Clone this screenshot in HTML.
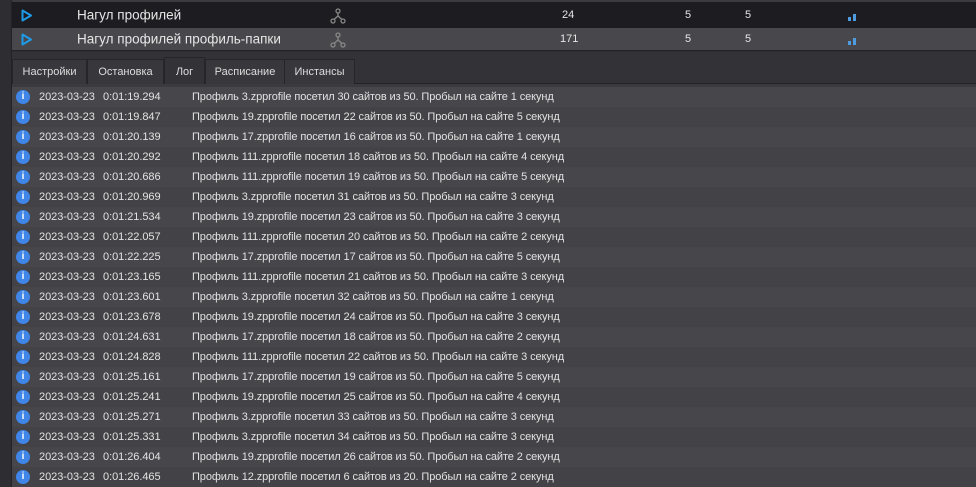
<!DOCTYPE html>
<html><head><meta charset="utf-8"><style>
*{margin:0;padding:0;box-sizing:border-box}
body{width:976px;height:487px;overflow:hidden;background:#2e2d31;font-family:"Liberation Sans","DejaVu Sans",sans-serif;color:#e6e6e6;position:relative}
.top{position:absolute;left:0;top:0;width:976px;height:2px;background:#3c3b40}
.r{position:absolute;left:12px;width:964px;font-size:13.5px}
.r1{top:2px;height:26px;background:#1d1c21}
.r2{top:28px;height:23px;background:#48474c;border-bottom:1px solid #232226}
.r span{position:absolute;top:50%;transform:translateY(-50%)}
.lbar{position:absolute;left:0;top:0;width:12px;height:487px;background:#2e2d31;border-right:1px solid #232226}
.tabs{position:absolute;left:12px;top:52px;width:964px;height:32px;background:#333237;border-bottom:1px solid #232226}
.gap{position:absolute;left:12px;top:84px;width:964px;height:3px;background:#3b3a3f}
.tab{position:absolute;top:7px;height:25px;background:#38373c;border:1px solid #262529;border-bottom:none;font-size:11px;color:#ddd;text-align:center;line-height:25px}
.tab.a{top:5px;height:28px;background:#333237;line-height:28px}
.log{position:absolute;left:12px;top:87px;width:964px}
.row{height:20px;position:relative;font-size:11px;color:#e2e2e2;line-height:20px;white-space:nowrap;letter-spacing:-0.05px}
.row:nth-child(odd){background:#47464b}
.row:nth-child(even){background:#434247}
.ic{position:absolute;left:4px;top:3px;width:14px;height:14px;border-radius:50%;background:#3f86e8;color:#fff;font-weight:bold;font-style:normal;font-size:10px;line-height:14px;text-align:center;font-family:"Liberation Sans",sans-serif}
.d{position:absolute;left:27px}.t{position:absolute;left:91px}.m{position:absolute;left:180px;letter-spacing:-0.1px}
</style></head><body>
<div class="top"></div>
<div class="lbar"></div>
<div class="r r1">
<svg style="position:absolute;left:9px;top:7px" width="12" height="13"><path d="M1.5 1.5 L10 6.5 L1.5 11.5 Z" fill="none" stroke="#1e9be8" stroke-width="2" stroke-linejoin="round"/></svg>
<span style="left:65px">Нагул профилей</span>
<svg style="position:absolute;left:318px;top:6px" width="16" height="16"><g fill="none" stroke="#888" stroke-width="1.3"><circle cx="8" cy="3" r="2"/><circle cx="3" cy="13" r="2"/><circle cx="13" cy="13" r="2"/><path d="M8 5v3M8 8L4 11.5M8 8l4 3.5"/></g></svg>
<span style="left:550px;font-size:11px">24</span><span style="left:673px;font-size:11px">5</span><span style="left:733px;font-size:11px">5</span>
<svg style="position:absolute;left:836px;top:11px" width="9" height="9"><rect x="0" y="4" width="3" height="4" fill="#4d9be0"/><rect x="5" y="1" width="3" height="7" fill="#4d9be0"/></svg>
</div>
<div class="r r2">
<svg style="position:absolute;left:9px;top:5px" width="12" height="13"><path d="M1.5 1.5 L10 6.5 L1.5 11.5 Z" fill="none" stroke="#1e9be8" stroke-width="2" stroke-linejoin="round"/></svg>
<span style="left:65px">Нагул профилей профиль-папки</span>
<svg style="position:absolute;left:318px;top:4px" width="16" height="16"><g fill="none" stroke="#888" stroke-width="1.3"><circle cx="8" cy="3" r="2"/><circle cx="3" cy="13" r="2"/><circle cx="13" cy="13" r="2"/><path d="M8 5v3M8 8L4 11.5M8 8l4 3.5"/></g></svg>
<span style="left:548px;font-size:11px">171</span><span style="left:673px;font-size:11px">5</span><span style="left:733px;font-size:11px">5</span>
<svg style="position:absolute;left:836px;top:9px" width="9" height="9"><rect x="0" y="4" width="3" height="4" fill="#4d9be0"/><rect x="5" y="1" width="3" height="7" fill="#4d9be0"/></svg>
</div>
<div class="tabs">
<div class="tab" style="left:0;width:75px">Настройки</div>
<div class="tab" style="left:75px;width:77px">Остановка</div>
<div class="tab a" style="left:152px;width:41px">Лог</div>
<div class="tab" style="left:193px;width:80px">Расписание</div>
<div class="tab" style="left:272px;width:71px">Инстансы</div>
</div>
<div class="gap"></div>
<div class="log">
<div class="row"><i class="ic">i</i><span class="d">2023-03-23</span><span class="t">0:01:19.294</span><span class="m">Профиль 3.zpprofile посетил 30 сайтов из 50. Пробыл на сайте 1 секунд</span></div>
<div class="row"><i class="ic">i</i><span class="d">2023-03-23</span><span class="t">0:01:19.847</span><span class="m">Профиль 19.zpprofile посетил 22 сайтов из 50. Пробыл на сайте 5 секунд</span></div>
<div class="row"><i class="ic">i</i><span class="d">2023-03-23</span><span class="t">0:01:20.139</span><span class="m">Профиль 17.zpprofile посетил 16 сайтов из 50. Пробыл на сайте 1 секунд</span></div>
<div class="row"><i class="ic">i</i><span class="d">2023-03-23</span><span class="t">0:01:20.292</span><span class="m">Профиль 111.zpprofile посетил 18 сайтов из 50. Пробыл на сайте 4 секунд</span></div>
<div class="row"><i class="ic">i</i><span class="d">2023-03-23</span><span class="t">0:01:20.686</span><span class="m">Профиль 111.zpprofile посетил 19 сайтов из 50. Пробыл на сайте 5 секунд</span></div>
<div class="row"><i class="ic">i</i><span class="d">2023-03-23</span><span class="t">0:01:20.969</span><span class="m">Профиль 3.zpprofile посетил 31 сайтов из 50. Пробыл на сайте 3 секунд</span></div>
<div class="row"><i class="ic">i</i><span class="d">2023-03-23</span><span class="t">0:01:21.534</span><span class="m">Профиль 19.zpprofile посетил 23 сайтов из 50. Пробыл на сайте 3 секунд</span></div>
<div class="row"><i class="ic">i</i><span class="d">2023-03-23</span><span class="t">0:01:22.057</span><span class="m">Профиль 111.zpprofile посетил 20 сайтов из 50. Пробыл на сайте 2 секунд</span></div>
<div class="row"><i class="ic">i</i><span class="d">2023-03-23</span><span class="t">0:01:22.225</span><span class="m">Профиль 17.zpprofile посетил 17 сайтов из 50. Пробыл на сайте 5 секунд</span></div>
<div class="row"><i class="ic">i</i><span class="d">2023-03-23</span><span class="t">0:01:23.165</span><span class="m">Профиль 111.zpprofile посетил 21 сайтов из 50. Пробыл на сайте 3 секунд</span></div>
<div class="row"><i class="ic">i</i><span class="d">2023-03-23</span><span class="t">0:01:23.601</span><span class="m">Профиль 3.zpprofile посетил 32 сайтов из 50. Пробыл на сайте 1 секунд</span></div>
<div class="row"><i class="ic">i</i><span class="d">2023-03-23</span><span class="t">0:01:23.678</span><span class="m">Профиль 19.zpprofile посетил 24 сайтов из 50. Пробыл на сайте 3 секунд</span></div>
<div class="row"><i class="ic">i</i><span class="d">2023-03-23</span><span class="t">0:01:24.631</span><span class="m">Профиль 17.zpprofile посетил 18 сайтов из 50. Пробыл на сайте 2 секунд</span></div>
<div class="row"><i class="ic">i</i><span class="d">2023-03-23</span><span class="t">0:01:24.828</span><span class="m">Профиль 111.zpprofile посетил 22 сайтов из 50. Пробыл на сайте 3 секунд</span></div>
<div class="row"><i class="ic">i</i><span class="d">2023-03-23</span><span class="t">0:01:25.161</span><span class="m">Профиль 17.zpprofile посетил 19 сайтов из 50. Пробыл на сайте 5 секунд</span></div>
<div class="row"><i class="ic">i</i><span class="d">2023-03-23</span><span class="t">0:01:25.241</span><span class="m">Профиль 19.zpprofile посетил 25 сайтов из 50. Пробыл на сайте 4 секунд</span></div>
<div class="row"><i class="ic">i</i><span class="d">2023-03-23</span><span class="t">0:01:25.271</span><span class="m">Профиль 3.zpprofile посетил 33 сайтов из 50. Пробыл на сайте 3 секунд</span></div>
<div class="row"><i class="ic">i</i><span class="d">2023-03-23</span><span class="t">0:01:25.331</span><span class="m">Профиль 3.zpprofile посетил 34 сайтов из 50. Пробыл на сайте 3 секунд</span></div>
<div class="row"><i class="ic">i</i><span class="d">2023-03-23</span><span class="t">0:01:26.404</span><span class="m">Профиль 19.zpprofile посетил 26 сайтов из 50. Пробыл на сайте 2 секунд</span></div>
<div class="row"><i class="ic">i</i><span class="d">2023-03-23</span><span class="t">0:01:26.465</span><span class="m">Профиль 12.zpprofile посетил 6 сайтов из 20. Пробыл на сайте 2 секунд</span></div>
</div>
</body></html>
